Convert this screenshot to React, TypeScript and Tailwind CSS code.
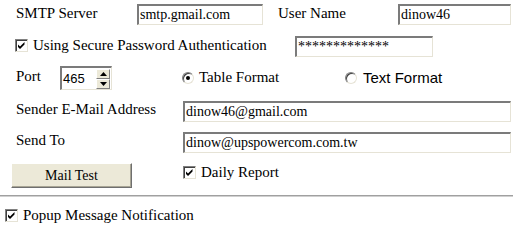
import React from "react";

const inset =
  "border-t-2 border-l-2 border-r border-b border-t-[#7b7b7b] border-l-[#7b7b7b] border-r-[#e6e3d6] border-b-[#e6e3d6] bg-white";

function Box({ w, value, sans }: { w: string; value: string; sans?: boolean }) {
  return (
    <div className={`${w} h-[21px] ${inset} flex items-center pl-[1px] overflow-hidden whitespace-nowrap font-['Liberation_Serif',serif] ${sans ? "font-['Liberation_Sans'] text-[13px]" : "text-[14px]"}`}>
      {value}
    </div>
  );
}

function Check() {
  return (
    <div className="w-[13px] h-[13px] shrink-0 border border-t-[#808080] border-l-[#808080] border-r-[#e6e3d6] border-b-[#e6e3d6] bg-white shadow-[inset_1px_1px_0_#404040] flex items-center justify-center">
      <svg width="9" height="9" viewBox="0 0 9 9">
        <path d="M1 3.5 L3 5.5 L7.5 1 L7.5 3.5 L3 8 L1 6 Z" fill="#000" />
      </svg>
    </div>
  );
}

function Radio({ on }: { on?: boolean }) {
  return (
    <div className="w-[12px] h-[12px] shrink-0 rounded-full border border-t-[#808080] border-l-[#808080] border-r-[#e6e3d6] border-b-[#e6e3d6] bg-white shadow-[inset_1px_1px_0_#404040] flex items-center justify-center">
      {on && <div className="w-[4px] h-[4px] rounded-full bg-black" />}
    </div>
  );
}

export default function App() {
  return (
    <div className="w-[515px] h-[231px] bg-white text-black font-['Liberation_Serif',serif] text-[15px] leading-none overflow-hidden">
      {/* Row 1 */}
      <div className="flex items-center h-[21px] mt-[4px] pl-[16px]">
        <div className="w-[121px] -mt-[3px]">SMTP Server</div>
        <Box w="w-[126px]" value="smtp.gmail.com" />
        <div className="w-[120px] ml-[15px] -mt-[3px]">User Name</div>
        <Box w="w-[113px]" value="dinow46" />
      </div>
      {/* Row 2 */}
      <div className="flex items-center h-[21px] mt-[11px] pl-[15px]">
        <div className="w-[280px] flex items-center -mt-[3px]">
          <Check />
          <span className="ml-[5px]">Using Secure Password Authentication</span>
        </div>
        <Box w="w-[138px]" value="*************" />
      </div>
      {/* Row 3 */}
      <div className="flex items-center h-[24px] mt-[9px] pl-[16px]">
        <div className="w-[44px] -mt-[3px]">Port</div>
        <div className={`w-[52px] h-[24px] ${inset} flex items-center justify-between`}>
          <span className="font-['Liberation_Sans',sans-serif] text-[13px] pl-[1px]">465</span>
          <div className="flex flex-col w-[14px] h-[20px] mr-[1px]">
            <div className="flex-1 bg-[#ece9d8] border border-t-white border-l-white border-r-[#808080] border-b-[#808080] flex items-center justify-center">
              <svg width="7" height="4" viewBox="0 0 7 4"><path d="M0 4 L3.5 0 L7 4 Z" fill="#000" /></svg>
            </div>
            <div className="flex-1 bg-[#ece9d8] border border-t-white border-l-white border-r-[#808080] border-b-[#808080] flex items-center justify-center">
              <svg width="7" height="4" viewBox="0 0 7 4"><path d="M0 0 L7 0 L3.5 4 Z" fill="#000" /></svg>
            </div>
          </div>
        </div>
        <div className="ml-[70px] w-[163px] flex items-center -mt-[1px]">
          <Radio on />
          <span className="ml-[5px]">Table Format</span>
        </div>
        <div className="flex items-center -mt-[1px]">
          <Radio />
          <span className="ml-[6px] font-['Liberation_Sans',sans-serif] text-[15px]">Text Format</span>
        </div>
      </div>
      {/* Row 4 */}
      <div className="flex items-center h-[21px] mt-[11px] pl-[16px]">
        <div className="w-[167px] -mt-[5px]">Sender E-Mail Address</div>
        <Box w="w-[328px]" value="dinow46@gmail.com" />
      </div>
      {/* Row 5 */}
      <div className="flex items-center h-[21px] mt-[10px] pl-[16px]">
        <div className="w-[167px] -mt-[5px]">Send To</div>
        <Box w="w-[328px]" value="dinow@upspowercom.com.tw" />
      </div>
      {/* Row 6 */}
      <div className="flex items-center h-[25px] mt-[10px] pl-[11px]">
        <button className="w-[121px] h-[25px] bg-[#ece9d8] border border-t-white border-l-white border-r-[#6f6f6f] border-b-[#6f6f6f] shadow-[inset_-1px_-1px_0_#a8a595] text-[14px] flex items-center justify-center">
          Mail Test
        </button>
        <div className="ml-[51px] flex items-center -mt-[6px]">
          <Check />
          <span className="ml-[5px]">Daily Report</span>
        </div>
      </div>
      {/* Separator */}
      <div className="mt-[7px] h-[2px] w-[513px] bg-[#a0a0a0] border-b border-b-[#d0d0d0]" />
      {/* Row 7 */}
      <div className="flex items-center mt-[11px] pl-[5px]">
        <Check />
        <span className="ml-[5px]">Popup Message Notification</span>
      </div>
    </div>
  );
}
